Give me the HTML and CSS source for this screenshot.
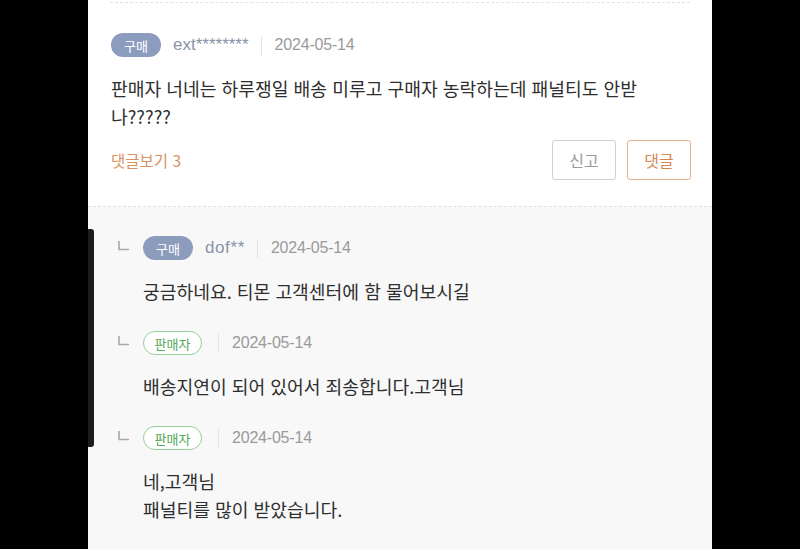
FILE: index.html
```html
<!DOCTYPE html>
<html lang="ko">
<head>
<meta charset="utf-8">
<link rel="stylesheet" href="styles.css">
</head>
<body>
<div class="panel">
  <div class="top-dash"></div>
  <div class="comment">
    <div class="meta">
      <span class="badge buyer">구매</span>
      <span class="user">ext********</span>
      <span class="divider"></span>
      <span class="date">2024-05-14</span>
    </div>
    <p class="text main-text">판매자 너네는 하루쟁일 배송 미루고 구매자 농락하는데 패널티도 안받<br>나?????</p>
    <div class="actions">
      <span class="more">댓글보기 3</span>
      <div class="buttons">
        <button class="btn report">신고</button>
        <button class="btn reply-btn">댓글</button>
      </div>
    </div>
  </div>
  <div class="replies">
    <div class="reply">
      <div class="meta">
        <svg class="arrow" width="12" height="10" viewBox="0 0 12 10"><path d="M1 0 V8.5 H11" fill="none" stroke="#a8a8a8" stroke-width="1.6"/></svg>
        <span class="badge buyer">구매</span>
        <span class="user short">dof**</span>
        <span class="divider"></span>
        <span class="date">2024-05-14</span>
      </div>
      <p class="text">궁금하네요. 티몬 고객센터에 함 물어보시길</p>
    </div>
    <div class="reply">
      <div class="meta">
        <svg class="arrow" width="12" height="10" viewBox="0 0 12 10"><path d="M1 0 V8.5 H11" fill="none" stroke="#a8a8a8" stroke-width="1.6"/></svg>
        <span class="badge seller">판매자</span>
        <span class="divider"></span>
        <span class="date">2024-05-14</span>
      </div>
      <p class="text">배송지연이 되어 있어서 죄송합니다.고객님</p>
    </div>
    <div class="reply">
      <div class="meta">
        <svg class="arrow" width="12" height="10" viewBox="0 0 12 10"><path d="M1 0 V8.5 H11" fill="none" stroke="#a8a8a8" stroke-width="1.6"/></svg>
        <span class="badge seller">판매자</span>
        <span class="divider"></span>
        <span class="date">2024-05-14</span>
      </div>
      <p class="text">네,고객님<br>패널티를 많이 받았습니다.</p>
    </div>
  </div>
  <div class="scrollbar"></div>
</div>
</body>
</html>
```

FILE: styles.css
```css
* { box-sizing: border-box; }
html, body { margin: 0; padding: 0; }
body {
  background: #000;
  width: 800px;
  height: 549px;
  overflow: hidden;
  font-family: "Noto Sans CJK KR", "Noto Sans", sans-serif;
}
.panel {
  position: relative;
  margin-left: 88px;
  width: 624px;
  height: 549px;
  background: #fff;
  display: flex;
  flex-direction: column;
}
.top-dash {
  margin: 2px 22px 0;
  border-top: 1px dashed #e2e2e2;
}
.comment {
  padding: 30px 21px 26px 23px;
  border-bottom: 1px dashed #e2e2e2;
}
.meta {
  display: flex;
  align-items: center;
  height: 24px;
}
.badge {
  display: inline-flex;
  align-items: center;
  justify-content: center;
  height: 24px;
  border-radius: 12px;
  font-size: 13px;
  line-height: 1;
}
.badge.buyer {
  width: 50px;
  background: #8c9cbd;
  color: #fff;
}
.badge.seller {
  width: 59px;
  background: #fff;
  border: 1px solid #95cf95;
  color: #58a858;
}
.user {
  margin-left: 12px;
  font-family: "Liberation Sans", "Noto Sans CJK KR", sans-serif;
  font-size: 17px;
  color: #8b93a8;
}
.user.short { letter-spacing: 0.6px; }
.divider {
  width: 1px;
  height: 19px;
  background: #e3e3e3;
  margin: 0 13px 0 12px;
}
.seller + .divider { margin-left: 16px; }
.date {
  font-family: "Liberation Sans", "Noto Sans", sans-serif;
  font-size: 16px;
  color: #9a9a9a;
  letter-spacing: -0.2px;
}
.text {
  margin: 17px 0 0;
  font-size: 18.2px;
  line-height: 28px;
  color: #2e2e2e;
}
.actions {
  margin-top: 10px;
  display: flex;
  align-items: center;
  justify-content: space-between;
  height: 40px;
}
.more {
  font-size: 15.5px;
  color: #d8915f;
}
.buttons {
  display: flex;
  gap: 11px;
}
.btn {
  width: 64px;
  height: 40px;
  background: #fff;
  border-radius: 3px;
  font-family: "Noto Sans CJK KR", sans-serif;
  font-size: 16px;
  padding: 0;
}
.btn.report {
  border: 1px solid #cfcfcf;
  color: #9a9a9a;
}
.btn.reply-btn {
  border: 1px solid #e6b08f;
  color: #d8864f;
}
.replies {
  flex: 1;
  background: #f8f8f8;
  padding: 29px 20px 0 30px;
}
.reply + .reply { margin-top: 26px; }
.reply .meta .arrow {
  margin-right: 13px;
  margin-top: -4px;
}
.reply .text { margin-left: 25px; }
.scrollbar {
  position: absolute;
  left: 0;
  top: 229px;
  width: 6px;
  height: 218px;
  background: #1c1c1c;
  border-radius: 0 3px 3px 0;
}
```
